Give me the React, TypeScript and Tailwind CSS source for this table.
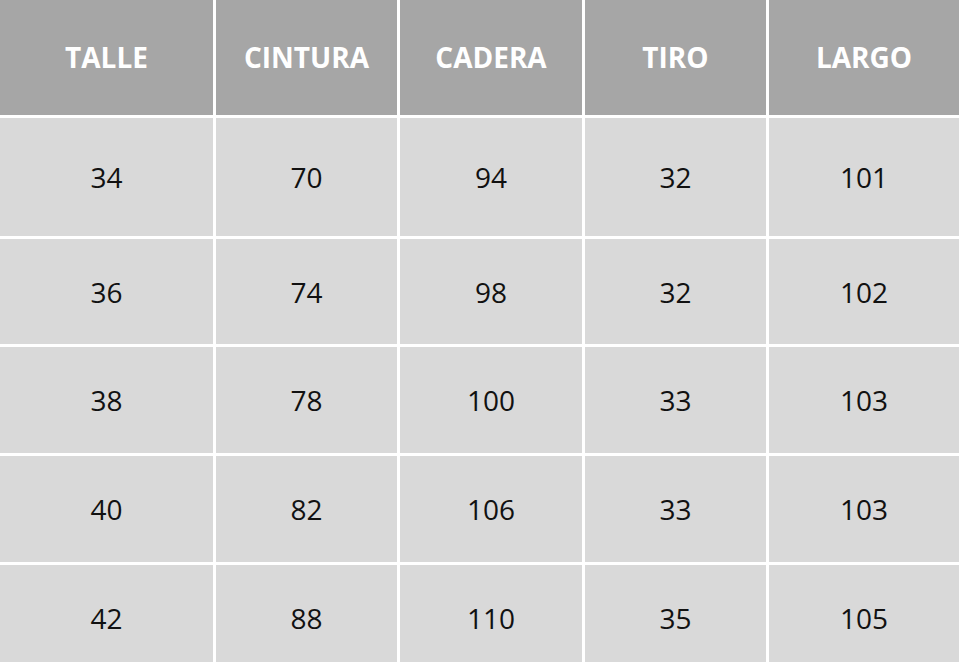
const headers = ["TALLE", "CINTURA", "CADERA", "TIRO", "LARGO"];

const rows = [
  ["34", "70", "94", "32", "101"],
  ["36", "74", "98", "32", "102"],
  ["38", "78", "100", "33", "103"],
  ["40", "82", "106", "33", "103"],
  ["42", "88", "110", "35", "105"],
];

const rowHeights = ["h-[118px]", "h-[105px]", "h-[106px]", "h-[106px]", "h-[106px]"];

export default function App() {
  return (
    <div className="h-[662px] w-[960px] overflow-hidden bg-white pr-[1px] font-['Open_Sans',sans-serif]">
      <div className="grid grid-cols-[213px_181px_182px_181px_190px] gap-[3px]">
        {/* Header */}
        {headers.map((h) => (
          <div
            key={h}
            className="flex h-[115px] items-center justify-center bg-[#a6a6a6] pb-[2px] text-[28px] font-bold text-white"
          >
            {h}
          </div>
        ))}

        {/* Body */}
        {rows.map((row, i) =>
          row.map((cell, j) => (
            <div
              key={`${i}-${j}`}
              className={`flex ${rowHeights[i]} items-center justify-center bg-[#d9d9d9] text-[28px] text-[#111111]`}
            >
              {cell}
            </div>
          ))
        )}
      </div>
    </div>
  );
}
